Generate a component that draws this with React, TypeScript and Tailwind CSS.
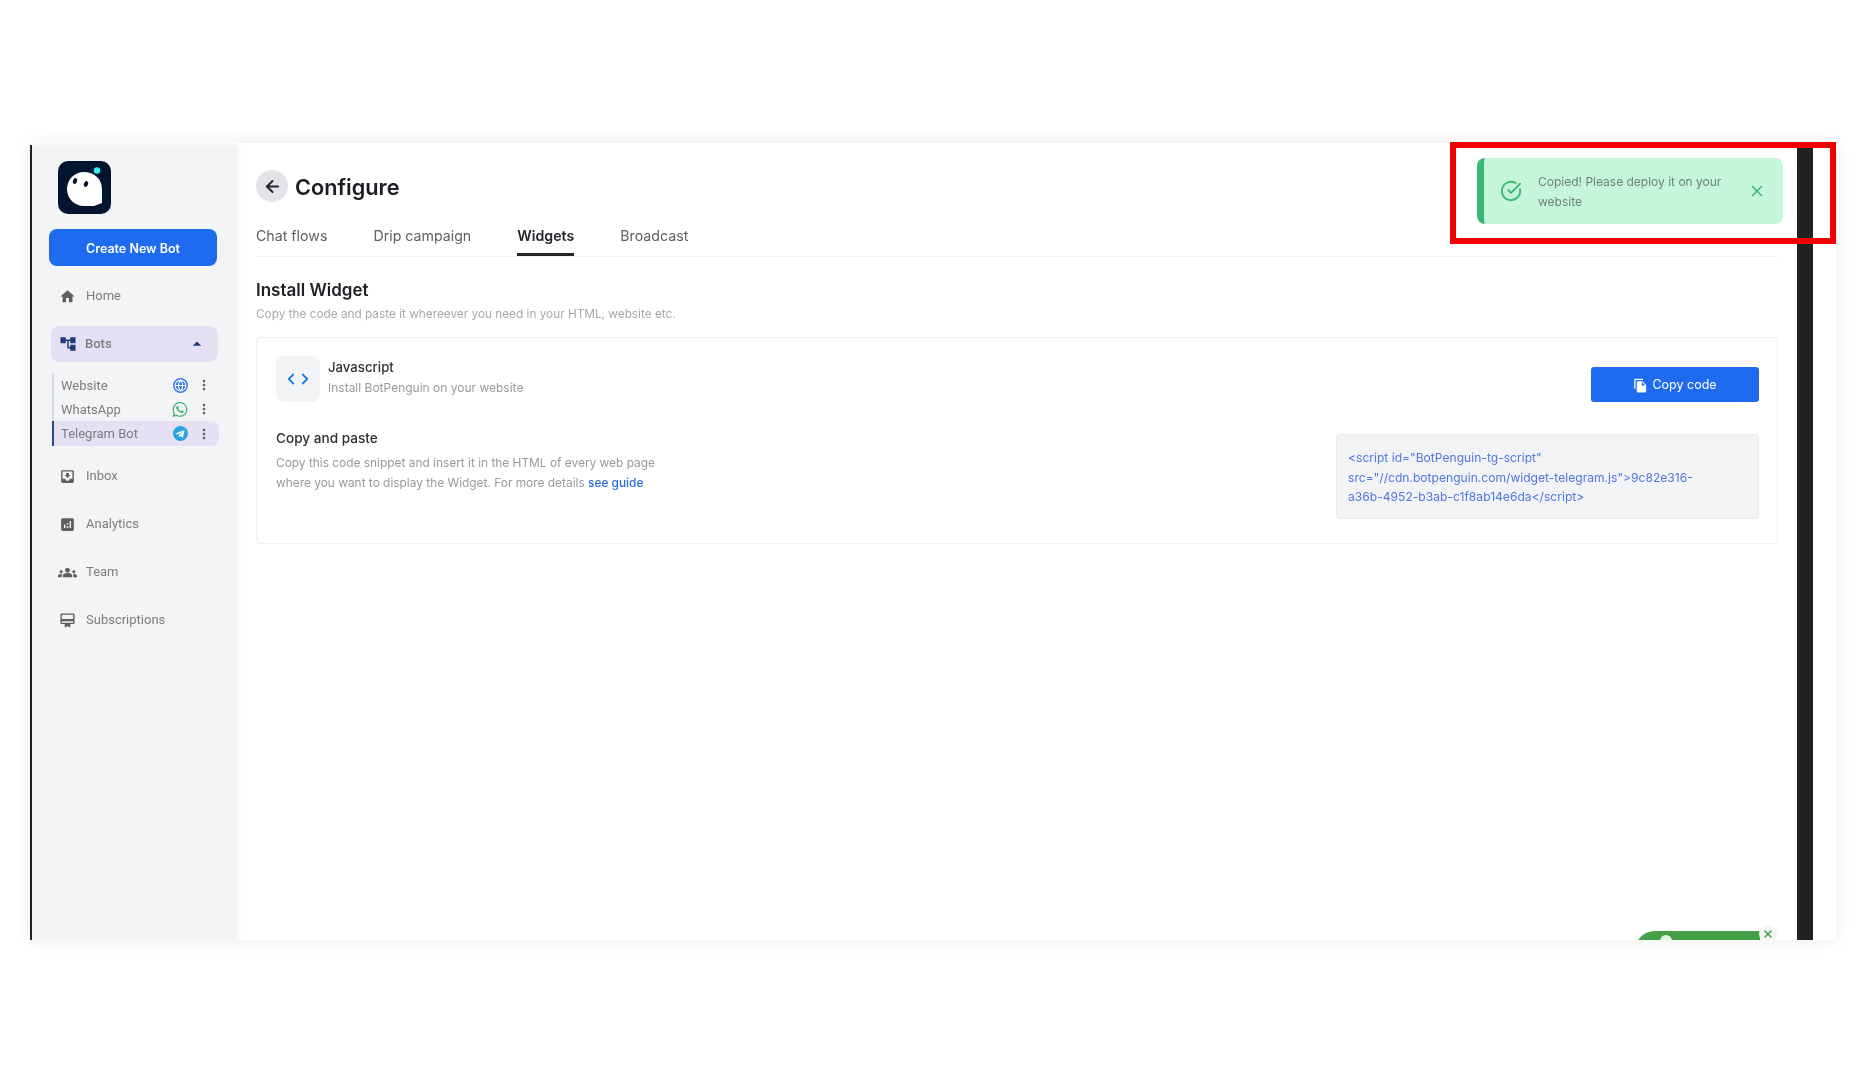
import { ArrowLeft, ChevronLeft, ChevronRight, CircleCheckBig, Globe, X } from 'lucide-react';
import { FaTelegramPlane, FaWhatsapp } from 'react-icons/fa';
import { MdAccountTree, MdAnalytics, MdArrowDropUp, MdCardMembership, MdFileCopy, MdGroups, MdHome, MdMoreVert, MdMoveToInbox } from 'react-icons/md';

const tabs = ['Chat flows', 'Drip campaign', 'Widgets', 'Broadcast'];

function Logo() {
  return (
    <div className="w-[53px] h-[53px] rounded-[10px] bg-[#03142f] ml-[26px]">
      <svg viewBox="0 0 53 53" className="w-full h-full">
        <path d="M26 11c-9 0-17 7-17 17 0 9 7 17 17 17h18V28c0-10-8-17-18-17z" fill="#fff" />
        <path d="M36 45l8-3v3z" fill="#03142f" />
        <circle cx="39" cy="9.500" r="3.200" fill="#2ff2f2" />
        <ellipse cx="17" cy="20" rx="2" ry="3" transform="rotate(20 17 20)" fill="#03142f" />
        <ellipse cx="28" cy="23" rx="2" ry="3" transform="rotate(20 28 23)" fill="#03142f" />
      </svg>
    </div>
  );
}

function NavItem({ label, icon }: { label: string; icon: React.ReactNode }) {
  return (
    <div className="h-[48px] flex items-center pl-[28px] font-['Roboto',sans-serif] text-[13px] text-[#7d7d7d]">
      <span className="w-[27px] flex text-[#5f5f5f] -ml-[1px]">{icon}</span>
      <span>{label}</span>
    </div>
  );
}

function BotRow({ label, icon, active }: { label: string; icon: React.ReactNode; active?: boolean }) {
  return (
    <div className={`h-[24px] flex items-center pl-[7px] pr-[7px] rounded-r-lg font-['Roboto',sans-serif] text-[13px] text-[#7d7d7d] ${active ? 'bg-[#e5e0f4] border-l-2 border-[#2b4a8c] h-[25px]' : 'border-l-2 border-[#d5d9e6]'}`}>
      <span className={`flex-1 ${active ? '' : 'pt-[2px]'}`}>{label}</span>
      <span className="w-[16px] flex justify-center">{icon}</span>
      <MdMoreVert size={16} className="text-[#5f5f5f] ml-[8px]" />
    </div>
  );
}

export default function App() {
  return (
    <div className="relative w-full h-[1080px] bg-white pt-[143px] pl-[30px] font-['Inter',sans-serif] overflow-hidden">
      <div className="relative w-[1806px] h-[797px] flex bg-white overflow-hidden shadow-[0_0_16px_rgba(0,0,0,0.08)] blur-[0.6px]">
        <aside className="w-[206px] shrink-0 mt-[2px] bg-[#f3f4f6] border-l-2 border-[#222] shadow-[2px_0_5px_rgba(0,0,0,0.05)]">
          <div className="pt-[16px]">
            <Logo />
          </div>
          <button className="block w-[168px] h-[37px] ml-[17px] mt-[15px] pt-[3px] rounded-lg bg-[#1f6bf0] text-white text-[12.5px] font-semibold">Create New Bot</button>
          <div className="mt-[6px]">
            <NavItem label="Home" icon={<MdHome size={17} />} />
          </div>
          <div className="h-[36px] w-[167px] ml-[19px] mt-[6px] rounded-lg bg-[#e5e0f4] flex items-center pl-[8px] pr-[11px] font-['Roboto',sans-serif] text-[13px] font-medium text-[#7d7d7d]">
            <MdAccountTree size={18} className="text-[#1e3a7a] mr-[8px]" />
            <span className="flex-1">Bots</span>
            <MdArrowDropUp size={20} className="text-[#1e3a7a]" />
          </div>
          <div className="w-[167px] ml-[20px] mt-[11px]">
            <BotRow label="Website" icon={<span className="w-[15px] h-[15px] rounded-full bg-[#3b78e7] flex items-center justify-center"><Globe size={13} className="text-white" /></span>} />
            <BotRow label="WhatsApp" icon={<FaWhatsapp size={17} className="text-[#3cb371]" />} />
            <BotRow label="Telegram Bot" active icon={<span className="w-[15px] h-[15px] rounded-full bg-[#27a5e1] flex items-center justify-center"><FaTelegramPlane size={10} className="text-white" /></span>} />
          </div>
          <div className="mt-[6px]">
            <NavItem label="Inbox" icon={<MdMoveToInbox size={17} />} />
            <NavItem label="Analytics" icon={<MdAnalytics size={17} />} />
            <NavItem label="Team" icon={<MdGroups size={19} className="-ml-[1px]" />} />
            <NavItem label="Subscriptions" icon={<MdCardMembership size={17} />} />
          </div>
        </aside>

        <main className="flex-1 pl-[20px] pt-[27px] pr-[19px]">
          <div className="flex items-center gap-[7px] h-[32px]">
            <span className="w-[32px] h-[32px] rounded-full bg-[#e3e4e8] flex items-center justify-center">
              <ArrowLeft size={19} strokeWidth={2.5} className="text-[#222]" />
            </span>
            <h1 className="text-[21.7px] leading-none font-semibold text-[#1c1c22] pt-[4px]">Configure</h1>
          </div>
          <div className="flex gap-[46px] mt-[18px] border-b border-[#f0f0f2] h-[37px] text-[14.2px] text-[#5f6066]">
            {tabs.map(t => (
              <span key={t} className={`pt-[5px] ${t === 'Widgets' ? 'font-semibold text-[#25252b] border-b-[3px] border-[#25252b]' : ''}`}>{t}</span>
            ))}
          </div>
          <h2 className="text-[17px] font-semibold text-[#1f1f25] mt-[21px]">Install Widget</h2>
          <p className="text-[11.8px] text-[#a9a9ad] mt-[2px]">Copy the code and paste it whereever you need in your HTML, website etc.</p>

          <section className="mt-[14px] h-[207px] border border-[#f1f1f3] rounded pt-[18px] pl-[19px] pr-[18px]">
            <div className="flex">
              <div className="flex flex-1">
                <div className="w-[44px] h-[46px] rounded-lg bg-[#f3f4f6] flex items-center justify-center text-[#1e7fe0]">
                  <ChevronLeft size={18} className="-mr-[2px]" strokeWidth={2.4} />
                  <ChevronRight size={18} className="-ml-[2px]" strokeWidth={2.4} />
                </div>
                <div className="ml-[8px] pt-[2px]">
                  <div className="text-[13.2px] font-medium text-[#333338]">Javascript</div>
                  <div className="text-[12px] text-[#9a9a9e] mt-[1px]">Install BotPenguin on your website</div>
                </div>
              </div>
              <button className="w-[168px] h-[35px] mt-[11px] pt-[2px] rounded-[3px] bg-[#1f6bf0] text-white text-[12.5px] flex items-center justify-center gap-[4px]">
                <MdFileCopy size={15} />
                Copy code
              </button>
            </div>
            <div className="flex justify-between items-start mt-[16px]">
              <div className="mt-[10px]">
                <div className="text-[13.6px] font-medium text-[#2e2e33]">Copy and paste</div>
                <p className="text-[11.9px] leading-[20px] text-[#9a9a9e] mt-[4px]">
                  Copy this code snippet and insert it in the HTML of every web page<br />
                  where you want to display the Widget. For more details <span className="text-[#2f6be0] font-medium">see guide</span>
                </p>
              </div>
              <div className="w-[423px] h-[85px] mt-[16px] border border-[#e9eaed] rounded bg-[#f2f3f5] px-[11px] pt-[13px] text-[12.1px] leading-[19.500px] text-[#4f78dc]">
                {'<script id="BotPenguin-tg-script"'}<br />
                {'src="//cdn.botpenguin.com/widget-telegram.js">9c82e316-'}<br />
                {'a36b-4952-b3ab-c1f8ab14e6da</script>'}
              </div>
            </div>
          </section>
        </main>

        <div className="w-[16px] shrink-0 bg-[#222]" />
        <div className="w-[23px] shrink-0" />

        <div className="absolute left-[1605px] top-[788px] w-[125px] h-[20px] rounded-tl-[24px] bg-[#43a047]" />
        <div className="absolute left-[1630px] top-[792px] w-[12px] h-[12px] rounded-full bg-[#e8f3e8]" />
        <div className="absolute left-[1729px] top-[782px] w-[18px] h-[18px] rounded-full bg-[#f5f5f5] flex items-center justify-center">
          <X size={12} strokeWidth={3} className="text-[#43a047]" />
        </div>

        <div className="absolute left-[1447px] top-[15px] w-[306px] h-[66px] rounded-lg bg-[#c6f6d9] border-l-[7px] border-[#38b873] flex items-center">
          <CircleCheckBig size={22} className="text-[#38b873] ml-[16px] shrink-0" />
          <p className="ml-[16px] w-[200px] pt-[2px] text-[12px] leading-[20px] text-[#6f8279]">Copied! Please deploy it on your website</p>
          <X size={18} className="text-[#38b873] ml-[10px]" />
        </div>
      </div>
      <div className="absolute left-[1450px] top-[142px] w-[386px] h-[102px] border-[6px] border-[#f00000]" />
    </div>
  );
}
